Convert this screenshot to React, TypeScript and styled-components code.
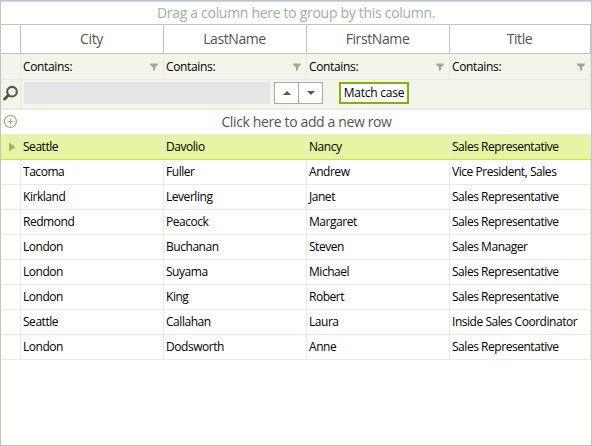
import React from "react";
import styled, { createGlobalStyle, css } from "styled-components";

const columns = "20px 143px 143px 143px 141px";
const edge = "#c5c5b7";
const line = "#e9e9e9";

const GlobalStyle = createGlobalStyle`
  * { box-sizing: border-box; }
  body { margin: 0; background: #fff; }
`;

const Grid = styled.div`
  width: 592px;
  height: 446px;
  border: 1px solid ${edge};
  background: #fff;
  color: #000;
  font-family: "Open Sans", "Noto Sans", sans-serif;
  font-size: 12px;
  letter-spacing: -0.46px;
  white-space: nowrap;
  overflow: hidden;
`;

const GroupPanel = styled.div`
  height: 24px;
  border-top: 1px solid #c9daf8;
  border-bottom: 1px solid ${edge};
  display: flex;
  align-items: center;
  justify-content: center;
  padding-bottom: 1px;
  font-size: 14px;
  letter-spacing: -0.3px;
  color: #aaaaa4;
`;

const HeaderRow = styled.div`
  display: grid;
  grid-template-columns: ${columns};
  height: 29px;
  border-bottom: 1px solid ${edge};
  color: #555550;
  font-size: 14px;
  letter-spacing: -0.4px;
`;

const HeaderCell = styled.div`
  display: flex;
  align-items: center;
  justify-content: center;
  padding: 0 1px 1px 0;
  border-right: 1px solid ${edge};
`;

const Row = styled.div<{ $kind?: "filter" | "current" }>`
  display: grid;
  grid-template-columns: ${columns};
  height: 25px;
  border-bottom: 1px solid ${line};
  ${(p) => p.$kind === "filter" && css`background: #f3f4ea;`}
  ${(p) => p.$kind === "current" && css`background: #e6f4a4; border-bottom-color: #c6e52f;`}
`;

const FilterRow = styled(Row)`
  height: 26px;
  letter-spacing: -0.35px;
`;

const Cell = styled.div`
  display: flex;
  align-items: center;
  justify-content: space-between;
  padding: 0 5px 0 2px;
  border-right: 1px solid ${line};
`;

const ValueCell = styled(Cell)`
  padding-bottom: 1px;
`;

const IndicatorCell = styled(Cell)`
  justify-content: center;
  padding: 0 0 0 2px;
`;

const SearchRow = styled.div`
  display: flex;
  height: 30px;
  width: 590px;
  border-bottom: 2px solid ${line};
  background: #f3f4ea;
`;

const SearchIndicator = styled(IndicatorCell)`
  width: 20px;
  padding: 0 0 1px 0;
`;

const SearchTools = styled.div`
  flex: 1;
  display: flex;
  align-items: flex-start;
  padding: 2px 0 0 3px;
  border-right: 1px solid ${line};
`;

const SearchBox = styled.div`
  width: 246px;
  height: 22px;
  background: #e5e5e5;
`;

const Stepper = styled.div`
  display: flex;
  width: 49px;
  height: 22px;
  margin-left: 4px;
  border: 1px solid #aaaaaa;
  background: #fff;
`;

const StepButton = styled.div`
  flex: 1;
  display: flex;
  align-items: center;
  justify-content: center;
  & + & { border-left: 1px solid #aaaaaa; }
`;

const MatchCase = styled.div`
  display: flex;
  align-items: center;
  justify-content: center;
  width: 70px;
  height: 22px;
  margin-left: 16px;
  padding-bottom: 1px;
  border: 2px solid #7fb30a;
  background: #fff;
  letter-spacing: -0.25px;
`;

const NewRow = styled.div`
  display: flex;
  height: 25px;
  border-bottom: 1px solid ${line};
`;

const NewRowIcon = styled.div`
  display: flex;
  width: 19px;
  padding: 4px 0 0 2px;
`;

const NewRowText = styled.div`
  flex: 1;
  display: flex;
  align-items: center;
  justify-content: center;
  padding: 0 0 1px 2px;
  color: #555550;
  font-size: 14px;
  letter-spacing: -0.37px;
`;

const Funnel = () => (
  <svg width="8" height="8" viewBox="0 0 8 8">
    <path d="M0 .5H8V1.5L5 4.5V7L3 8V4.5L0 1.5Z" fill="#a4ab82" />
  </svg>
);

const Triangle = ({ down = false }: { down?: boolean }) => (
  <svg width="8" height="4" viewBox="0 0 8 4">
    <path d={down ? "M0 0H8L4 4Z" : "M0 4H8L4 0Z"} fill="#55554f" />
  </svg>
);

const Magnifier = () => (
  <svg width="17" height="17" viewBox="0 0 17 17">
    <circle cx="10" cy="6.7" r="4.8" fill="none" stroke="#55554f" strokeWidth="2.1" />
    <path d="M6.5 10.2L2.6 14" stroke="#55554f" strokeWidth="3" strokeLinecap="round" />
  </svg>
);

const Plus = () => (
  <svg width="14" height="14" viewBox="0 0 14 14" fill="none" stroke="#a3ad84" strokeWidth="1.2">
    <circle cx="7.4" cy="7.4" r="6" />
    <path d="M4.5 7.5H10.5M7.5 4.5V10.5" />
  </svg>
);

const Pointer = () => (
  <svg width="8" height="10" viewBox="0 0 8 10">
    <path d="M1 .5L7.5 5L1 9.5Z" fill="#a4ab82" />
  </svg>
);

const headers = ["City", "LastName", "FirstName", "Title"];
const people = [
  ["Seattle", "Davolio", "Nancy", "Sales Representative"],
  ["Tacoma", "Fuller", "Andrew", "Vice President, Sales"],
  ["Kirkland", "Leverling", "Janet", "Sales Representative"],
  ["Redmond", "Peacock", "Margaret", "Sales Representative"],
  ["London", "Buchanan", "Steven", "Sales Manager"],
  ["London", "Suyama", "Michael", "Sales Representative"],
  ["London", "King", "Robert", "Sales Representative"],
  ["Seattle", "Callahan", "Laura", "Inside Sales Coordinator"],
  ["London", "Dodsworth", "Anne", "Sales Representative"],
];

export default function App() {
  return (
    <>
      <GlobalStyle />
      <Grid>
        <GroupPanel>Drag a column here to group by this column.</GroupPanel>
        <HeaderRow>
          <HeaderCell />
          {headers.map((h) => <HeaderCell key={h}>{h}</HeaderCell>)}
        </HeaderRow>
        <FilterRow $kind="filter">
          <IndicatorCell />
          {headers.map((h) => <Cell key={h}><span>Contains:</span><Funnel /></Cell>)}
        </FilterRow>
        <SearchRow>
          <SearchIndicator><Magnifier /></SearchIndicator>
          <SearchTools>
            <SearchBox />
            <Stepper>
              <StepButton><Triangle /></StepButton>
              <StepButton><Triangle down /></StepButton>
            </Stepper>
            <MatchCase>Match case</MatchCase>
          </SearchTools>
        </SearchRow>
        <NewRow>
          <NewRowIcon><Plus /></NewRowIcon>
          <NewRowText>Click here to add a new row</NewRowText>
        </NewRow>
        {people.map((person, i) => (
          <Row key={person[1]} $kind={i === 0 ? "current" : undefined}>
            <IndicatorCell>{i === 0 && <Pointer />}</IndicatorCell>
            {person.map((value, j) => <ValueCell key={j}>{value}</ValueCell>)}
          </Row>
        ))}
      </Grid>
    </>
  );
}
